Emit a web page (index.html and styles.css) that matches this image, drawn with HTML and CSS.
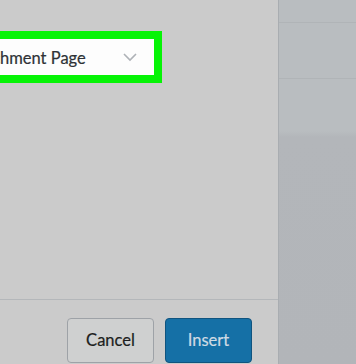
FILE: index.html
```html
<!DOCTYPE html>
<html>
    <head>
        <title>Insert media</title>
        <meta charset="UTF-8">
        <meta name="viewport" content="width=device-width, initial-scale=1.0">
        <link rel="stylesheet" href="styles.css">
    </head>
    <body>
        <div class="screen">
            <div class="modal">
                <div class="modal-body">
                    <div class="link-select">
                        <span class="link-value">Attachment Page</span>
                        <svg class="chevron" width="14" height="9" viewBox="0 0 14 9">
                            <path d="M1 1 L7 7 L13 1" fill="none" stroke="#aeb2b7" stroke-width="1.6"/>
                        </svg>
                    </div>
                </div>
                <div class="modal-footer">
                    <button class="btn cancel">Cancel</button>
                    <button class="btn insert">Insert</button>
                </div>
            </div>
            <div class="side">
                <div class="side-row first"></div>
                <div class="side-row second"></div>
                <div class="side-rest"></div>
            </div>
        </div>
    </body>
</html>
```

FILE: styles.css
```css
body {
    margin: 0;
    font-family: Lato, "Open Sans", sans-serif;
}
* {box-sizing: border-box;}

.screen {
    display: flex;
    width: 356px;
    height: 364px;
    overflow: hidden;
}

/* Left part: the dimmed modal */
.modal {
    width: 279px;
    display: flex;
    flex-direction: column;
    background-color: #cbcbcb;
    border-right: 1px solid #a9adb1;
}

.modal-body {
    height: 300px;
    padding-top: 31px;
    border-bottom: 1px solid #b4b7ba;
}

/* Attachment link dropdown, highlighted with a green frame */
.link-select {
    display: flex;
    align-items: center;
    width: 208px;
    height: 52px;
    margin-left: -46px;
    border: 8px solid #06f406;
    background-color: #fdfdfd;
    padding: 0 16px 0 0;
}
.link-value {
    flex: 1;
    font-size: 16.5px;
    color: #2e3236;
    padding-top: 1px;
    -webkit-text-stroke: 0.2px #2e3236;
}
.chevron {
    margin-right: 1px;
}

.modal-footer {
    display: flex;
    justify-content: flex-end;
    gap: 11px;
    padding: 18px 26px 0 0;
}

.btn {
    width: 87px;
    height: 45px;
    border-radius: 4px;
    font-family: Lato, "Open Sans", sans-serif;
    font-size: 16.5px;
    padding: 0 0 2px 0;
    -webkit-text-stroke: 0.2px currentColor;
}
.cancel {
    background-color: #cfd0d0;
    border: 1px solid #9ea2a7;
    color: #1c1e20;
}
.insert {
    background-color: #1570a6;
    border: 1px solid #10547f;
    color: #cfdbe4;
}

/* Right part: the page behind the modal */
.side {
    flex: 1;
    display: flex;
    flex-direction: column;
    background-color: #b9bdc0;
}
.side-row {
    border-bottom: 1px solid #b0b4b7;
}
.side-row.first {
    height: 23px;
}
.side-row.second {
    height: 56px;
}
.side-rest {
    flex: 1;
    background: linear-gradient(#b9bdc0 0, #b9bdc0 52px, #b3b6ba 58px, #b2b5b9 100%);
}
```
